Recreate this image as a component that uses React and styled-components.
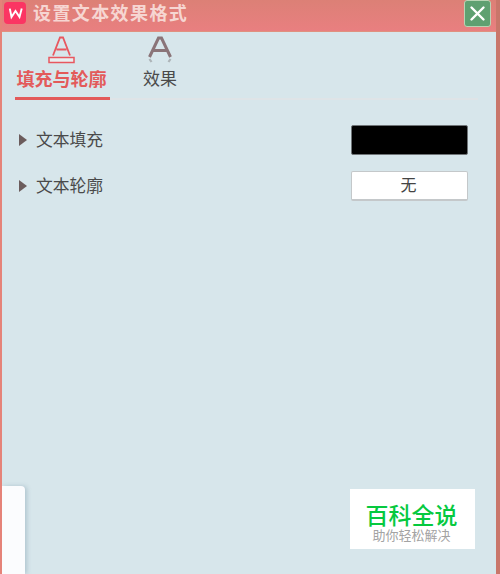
import React from 'react';
import styled, { createGlobalStyle } from 'styled-components';

const cjk = '"Noto Sans CJK SC", "Liberation Sans", sans-serif';

const GlobalStyle = createGlobalStyle`
  html, body {
    margin: 0;
    padding: 0;
    background: #d7e6eb;
  }
`;

const Page = styled.div`
  position: relative;
  width: 500px;
  height: 574px;
  overflow: hidden;
  display: flex;
  flex-direction: column;
  box-sizing: border-box;
  font-family: ${cjk};
  background: #d7e6eb;
  border-left: 2px solid #e58379;
  border-right: 4px solid #c9766a;
`;

const TitleBar = styled.div`
  flex: none;
  height: 32px;
  margin: 0 -4px 0 -2px;
  padding: 0 9px 0 4px;
  display: flex;
  align-items: flex-start;
  background: linear-gradient(#dc8076, #e97f80);
  border-bottom: 1px solid #e0917f;
  box-sizing: border-box;
`;

const Logo = styled.svg`
  flex: none;
  width: 22px;
  height: 22px;
  margin-top: 2px;
`;

const Title = styled.div`
  margin: 0 0 0 7px;
  font-size: 18px;
  line-height: 24px;
  font-weight: 700;
  letter-spacing: 1.4px;
  color: #f6d6d2;
`;

const CloseButton = styled.div`
  margin-left: auto;
  width: 27px;
  height: 27px;
  display: flex;
  align-items: center;
  justify-content: center;
  box-sizing: border-box;
  background: #5fa071;
  border: 1px solid #b9d4b4;
  border-radius: 3px;
`;

const Tabs = styled.div`
  flex: none;
  margin: 0 18px 0 13px;
  height: 68px;
  display: flex;
  gap: 33px;
  border-bottom: 2px solid #dfe4e7;
  box-sizing: border-box;
`;

const Tab = styled.div`
  display: flex;
  flex-direction: column;
  align-items: center;
  width: ${p => p.$width}px;
  height: 68px;
  padding: ${p => (p.$active ? '0 3px 0 1px' : '0')};
  box-sizing: border-box;
  border-bottom: ${p => (p.$active ? '3px solid #e35a5a' : 'none')};
`;

const TabIcon = styled.svg`
  flex: none;
  width: 28px;
  height: 30px;
  margin-top: 6px;
  overflow: visible;
`;

const TabLabel = styled.div`
  margin-top: -2px;
  font-size: ${p => (p.$active ? 18 : 17)}px;
  line-height: 24px;
  white-space: nowrap;
  font-weight: ${p => (p.$active ? 700 : 400)};
  color: ${p => (p.$active ? '#e35a5a' : '#4a4a4a')};
`;

const Rows = styled.div`
  display: flex;
  flex-direction: column;
  gap: 16px;
  padding: 25px 28px 0 17px;
`;

const Row = styled.div`
  display: flex;
  align-items: center;
  height: 30px;
`;

const Arrow = styled.span`
  flex: none;
  width: 0;
  height: 0;
  margin-bottom: 1px;
  border-left: 8px solid #6b5c5c;
  border-top: 6px solid transparent;
  border-bottom: 6px solid transparent;
`;

const RowLabel = styled.div`
  margin: 0 0 2px 9px;
  font-size: 16.8px;
  line-height: 28px;
  color: #4a4a4a;
`;

const Swatch = styled.div`
  margin-left: auto;
  width: 117px;
  height: 30px;
  box-sizing: border-box;
  display: flex;
  align-items: center;
  justify-content: center;
  padding: 0 2px 3px 0;
  font-size: 16px;
  color: #444;
  background: ${p => p.$color};
  border: 1px solid ${p => (p.$color === '#000' ? '#6f7477' : '#c4c8ca')};
  border-bottom-width: ${p => (p.$color === '#000' ? 1 : 2)}px;
  border-radius: 2px;
`;

const SideCard = styled.div`
  position: absolute;
  left: 0;
  bottom: 0;
  width: 23px;
  height: 88px;
  background: #fbfcfe;
  border-radius: 0 4px 0 0;
  box-shadow: 2px 0 4px rgba(130, 160, 175, 0.45);
`;

const Watermark = styled.div`
  position: absolute;
  left: 348px;
  top: 489px;
  width: 125px;
  height: 60px;
  padding-right: 2px;
  box-sizing: border-box;
  display: flex;
  flex-direction: column;
  align-items: center;
  background: #fff;
`;

const WatermarkTitle = styled.div`
  margin-top: 12px;
  font-size: 23px;
  line-height: 26px;
  font-weight: 500;
  color: #06c93f;
`;

const WatermarkSub = styled.div`
  font-size: 13px;
  line-height: 16px;
  color: #a3a3a3;
`;

const App = () => (
  <Page>
    <GlobalStyle />
    <TitleBar>
      <Logo viewBox="0 0 22 22">
        <rect width="22" height="22" rx="4" fill="#fb3563" />
        <path d="M6 7.5 L7.5 15 L11.5 9 L15.5 15 L17.5 7.5" fill="none" stroke="#fff" strokeWidth="1.9" strokeLinejoin="miter" strokeLinecap="square" />
      </Logo>
      <Title>设置文本效果格式</Title>
      <CloseButton>
        <svg width="17" height="17" viewBox="0 0 17 17">
          <path d="M2.5 2.5 L14.5 14.5 M14.5 2.5 L2.5 14.5" stroke="#fff" strokeWidth="2.4" strokeLinecap="round" />
        </svg>
      </CloseButton>
    </TitleBar>
    <Tabs>
      <Tab $active $width={95}>
        <TabIcon viewBox="0 0 28 30">
          <path d="M5 17.5 L12 -0.5 H15 L22 17.5 M8.5 11.5 H18.5" fill="none" stroke="#e8575f" strokeWidth="1.8" />
          <rect x="1" y="19.5" width="25" height="5" fill="#e9eef0" stroke="#e8575f" strokeWidth="1.5" />
        </TabIcon>
        <TabLabel $active>填充与轮廓</TabLabel>
      </Tab>
      <Tab $width={34}>
        <TabIcon viewBox="0 0 28 30">
          <path d="M3.5 19 L12.5 0 H15.5 L24.5 19 M7.5 12.5 H20.5" fill="none" stroke="#8a7478" strokeWidth="3" />
          <path d="M3.5 21 L5.5 24 M24.5 21 L22.5 24" fill="none" stroke="#8a8a8e" strokeWidth="2.2" opacity="0.55" />
        </TabIcon>
        <TabLabel>效果</TabLabel>
      </Tab>
    </Tabs>
    <Rows>
      <Row>
        <Arrow />
        <RowLabel>文本填充</RowLabel>
        <Swatch $color="#000" />
      </Row>
      <Row>
        <Arrow />
        <RowLabel>文本轮廓</RowLabel>
        <Swatch $color="#fff">无</Swatch>
      </Row>
    </Rows>
    <SideCard />
    <Watermark>
      <WatermarkTitle>百科全说</WatermarkTitle>
      <WatermarkSub>助你轻松解决</WatermarkSub>
    </Watermark>
  </Page>
);

export default App;
